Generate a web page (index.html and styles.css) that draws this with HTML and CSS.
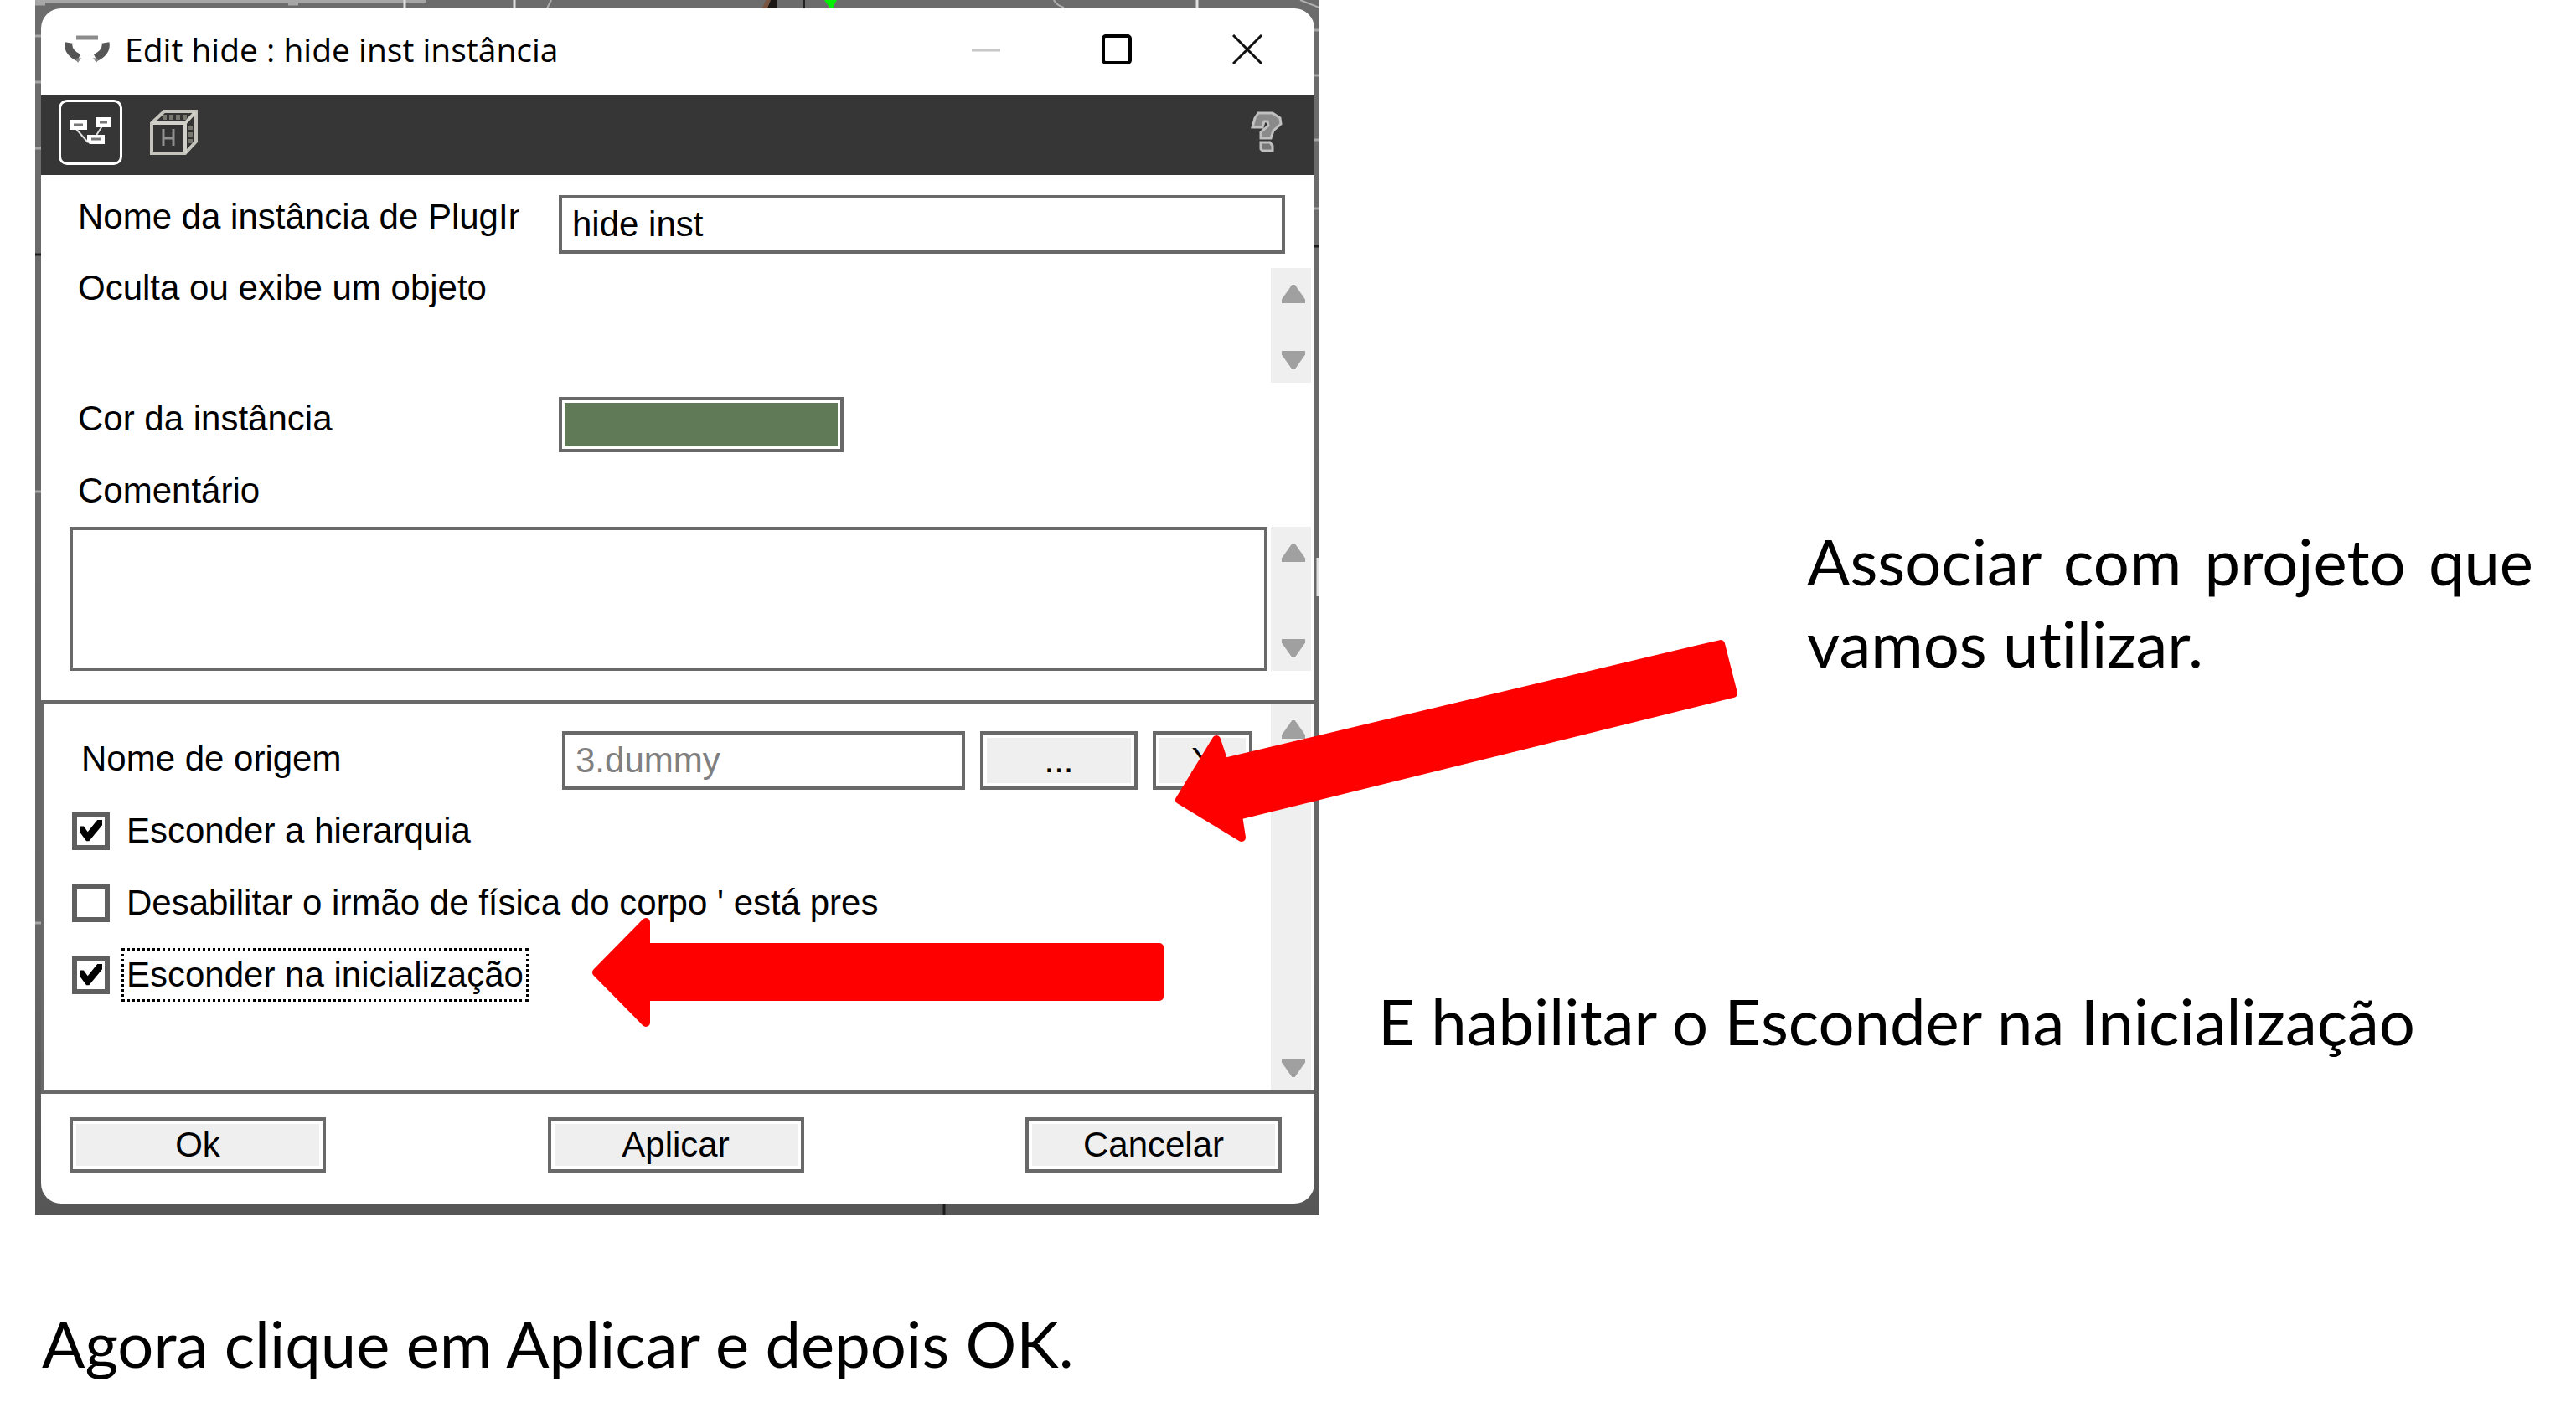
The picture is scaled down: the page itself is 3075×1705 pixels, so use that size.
FILE: index.html
```html
<!DOCTYPE html>
<html lang="pt-BR">
<head>
<meta charset="utf-8">
<title>Edit hide</title>
<link rel="stylesheet" href="styles.css">
</head>
<body>
<main class="slide">
  <section class="scene">
    <svg class="scene-lines" aria-hidden="true" width="100%" height="100%">
      <path d="M0 1h467" stroke="#a6a6a6" stroke-width="4"/>
      <path d="M0 5h12M302 5h12M0 43h7M0 98h7M0 177h7M0 587h7M0 1102h7M1527 36h6M1527 90h6M1527 167h6M1527 249h6" stroke="#a6a6a6" stroke-width="3"/>
      <path d="M441 0v10M572 0v10M1387 0v10" stroke="#e0e0e0" stroke-width="3"/>
      <path d="M616 0l-5 10M1216 0q3 6 12 9M1510 0l23 9" stroke="#b0b0b0" stroke-width="2" fill="none"/>
      <path d="M872 0h6l-4 10h-6z" fill="#7a5440"/>
      <path d="M878 0h8v10h-12z" fill="#1c1614"/>
      <path d="M918 0v10" stroke="#222" stroke-width="2"/>
      <path d="M942 0h15l-4 7v3h-6v-3z" fill="#00f000"/>
      <path d="M0 304h7M1527 294h6M1085 1436v15" stroke="#1c1c1c" stroke-width="3"/>
      <path d="M1531 666v46" stroke="#e0e0e0" stroke-width="3"/>
    </svg>
    <form class="window">
      <header class="titlebar">
        <svg class="app-icon" viewBox="0 0 54 34" aria-hidden="true">
          <path d="M14 3h26" stroke="#8c8c8c" stroke-width="5"/>
          <path d="M5 9q-2 11 12 18M49 9q2 11-12 18" fill="none" stroke="#555" stroke-width="9"/>
          <path d="M13 28l7-1-4 6zM41 28l-7-1 4 6z" fill="#888"/>
        </svg>
        <h1 class="title">Edit hide : hide inst instância</h1>
        <div class="controls">
          <button type="button" aria-label="Minimizar" disabled><svg viewBox="0 0 36 36"><path d="M1 19h34" stroke="#c8c8c8" stroke-width="3"/></svg></button>
          <button type="button" aria-label="Maximizar"><svg viewBox="0 0 36 36"><rect x="2" y="2" width="32" height="32" rx="3" fill="none" stroke="#000" stroke-width="4"/></svg></button>
          <button type="button" aria-label="Fechar"><svg viewBox="0 0 36 36"><path d="M1 1l34 34M35 1L1 35" stroke="#111" stroke-width="3"/></svg></button>
        </div>
      </header>
      <nav class="toolbar">
        <button type="button" class="tool tool-on" aria-label="Esquema">
          <svg viewBox="3 3 70 72"><path d="M20 34l15 17M53 30l-9 14" stroke="#ddd" stroke-width="2"/><path d="M13 24h21v12H13zM44 21h18v12H44zM34 42h21v11H37l-3-3z" fill="#fff"/><path d="M18 30h11M49 27h9M39 47h11" stroke="#777" stroke-width="3"/></svg>
        </button>
        <button type="button" class="tool" aria-label="Hierarquia">
          <svg viewBox="0 0 76 78"><path d="M11 28l15-14h38v36L51 64H11z" fill="#333" stroke="#c4c4bc" stroke-width="4"/><path d="M11 28h40v36M51 28l12-13" fill="none" stroke="#d0d0c8" stroke-width="4"/><path d="M24 21h30M57 31v24" stroke="#77776f" stroke-width="6" stroke-dasharray="5 3"/><path d="M25 35v20M37 35v20M25 46h12" stroke="#909090" stroke-width="3" fill="none"/></svg>
        </button>
        <button type="button" class="help" aria-label="Ajuda">
          <svg viewBox="0 0 40 50"><path d="M6 8L10 2h17l9 6 1 7-9 8-3 9H13v-7l9-8-1-5h-4l-2 7H3z" fill="#8a8a8a" stroke="#c0c0c0" stroke-width="3"/><path d="M13 37h11l3 4v6H15l-2-2z" fill="#777" stroke="#c0c0c0" stroke-width="3"/></svg>
        </button>
      </nav>
      <div class="general">
        <div class="row name-row">
          <label class="label" for="inst">Nome da instância de PlugIn</label>
          <input class="field" id="inst" type="text" value="hide inst">
        </div>
        <div class="about">
          <p>Oculta ou exibe um objeto</p>
          <div class="scroll"><i class="up"></i><i class="down"></i></div>
        </div>
        <div class="row color-row">
          <label class="label" for="cor">Cor da instância</label>
          <button type="button" class="swatch" id="cor"></button>
        </div>
        <label class="comment-label" for="com">Comentário</label>
        <div class="comment">
          <textarea class="field" id="com"></textarea>
          <div class="scroll"><i class="up"></i><i class="down"></i></div>
        </div>
      </div>
      <div class="panel">
        <div class="options">
          <div class="row source-row">
            <label class="label" for="src">Nome de origem</label>
            <input class="field muted" id="src" type="text" value="3.dummy" readonly>
            <button type="button" class="btn browse">...</button>
            <button type="button" class="btn clear">X</button>
          </div>
          <label class="check"><input type="checkbox" checked><span>Esconder a hierarquia</span></label>
          <label class="check"><input type="checkbox"><span>Desabilitar o irmão de física do corpo ' está pres</span></label>
          <label class="check"><input type="checkbox" checked><span class="focus">Esconder na inicialização</span></label>
        </div>
        <div class="scroll"><i class="up"></i><i class="down"></i></div>
      </div>
      <footer class="actions">
        <button type="button" class="btn">Ok</button>
        <button type="button" class="btn">Aplicar</button>
        <button type="button" class="btn">Cancelar</button>
      </footer>
    </form>
  </section>
  <aside class="notes">
    <p class="note-link">Associar com projeto que vamos utilizar.</p>
    <p class="note-hide">E habilitar o Esconder na Inicialização</p>
  </aside>
  <p class="closing">Agora clique em Aplicar e depois OK.</p>
  <svg class="arrow arrow-link" viewBox="0 0 676 248" aria-hidden="true"><path d="M6 194L50 122 59 149 652 8 667 67 76 213 80 239z"/></svg>
  <svg class="arrow arrow-hide" viewBox="0 0 684 132" aria-hidden="true"><path d="M6 66L65 6V36H678V95H65V126z"/></svg>
</main>
</body>
</html>
```
FILE: styles.css
```css
* { box-sizing: border-box; }
body { margin: 0; background: #fff; color: #000; }
p, h1 { margin: 0; font-weight: normal; }
button { padding: 0; border: 0; background: none; font: inherit; color: inherit; }
svg { display: block; }

.slide {
  position: relative;
  display: grid;
  grid-template-columns: minmax(0, 1533fr) minmax(0, 1500fr);
  padding-left: 42px;
  font: 76px/98px Lato, "Open Sans", sans-serif;
  font-variant-ligatures: none;
}

/* Modelling scene behind the dialog */
.scene {
  position: relative;
  padding: 10px 6px 14px 7px;
  background: linear-gradient(#6c6c6c, #666 80%, #565656);
  font: 42px/48px "Liberation Sans", Arial, sans-serif;
}
.scene-lines { position: absolute; inset: 0; }

.window {
  position: relative;
  overflow: hidden;
  border-radius: 24px;
  background: #fff;
}
.titlebar { display: flex; align-items: center; height: 104px; padding: 0 62px 6px 28px; }
.app-icon { width: 54px; height: 34px; }
.title { flex: 1; margin-left: 18px; font: 39px/52px "Open Sans", "Noto Sans", sans-serif; }
.controls { display: flex; gap: 120px; }
.controls svg { width: 36px; height: 36px; }

.toolbar { display: flex; align-items: center; gap: 24px; height: 95px; padding: 0 37px 8px 21px; background: #363636; }
.tool { width: 76px; height: 78px; }
.tool-on { border: 3px solid #fff; border-radius: 10px; }
.tool svg { width: 100%; height: 100%; }
.help { margin-left: auto; }
.help svg { width: 40px; height: 50px; }

.general { padding: 24px 4px 35px 34px; }
.row { display: flex; align-items: flex-start; }
.label { width: 526px; overflow: hidden; white-space: nowrap; }
.general .label, .about p, .comment-label { margin-left: 10px; }
.field {
  min-width: 0;
  height: 70px;
  padding: 0 12px;
  border: 4px solid #696969;
  border-radius: 0;
  outline: 0;
  background: #fff;
  font: inherit;
  color: #000;
}
.name-row { padding-right: 31px; }
.name-row .field { flex: 1; margin-left: 48px; }
.name-row .label, .color-row .label { padding-top: 2px; }
.about { display: flex; justify-content: space-between; height: 137px; margin-top: 17px; }
.color-row { margin-top: 17px; }
.swatch {
  width: 340px;
  height: 66px;
  margin-left: 48px;
  border: 4px solid #696969;
  background: #607a58;
  box-shadow: inset 0 0 0 3px #fff;
}
.comment-label { display: block; margin-top: 22px; }
.comment { display: flex; gap: 4px; height: 172px; margin-top: 19px; }
.comment .field { flex: 1; height: auto; resize: none; }

.scroll {
  display: flex;
  flex: none;
  flex-direction: column;
  justify-content: space-between;
  align-items: center;
  width: 48px;
  padding: 20px 0 16px 6px;
  background: #efefef;
}
.up, .down { width: 28px; height: 22px; background: #a0a0a0; }
.up { clip-path: polygon(44% 0, 56% 0, 100% 80%, 100% 100%, 0 100%, 0 80%); }
.down { clip-path: polygon(0 0, 100% 0, 100% 20%, 56% 100%, 44% 100%, 0 20%); }

.panel { display: flex; padding-right: 4px; border: 4px solid #696969; border-right: 0; }
.options { flex: 1; min-width: 0; padding: 33px 22px 106px 33px; }
.source-row .label { margin: 9px 48px 0 11px; }
.source-row .field { flex: 1; }
.muted { color: #808080; }
.btn { border: 4px solid #696969; background: #efefef; box-shadow: inset 0 0 0 4px #fff; }
.source-row .btn { height: 70px; margin-left: 18px; }
.browse { width: 188px; }
.clear { width: 119px; }
.check { display: flex; align-items: center; height: 64px; margin-top: 22px; white-space: nowrap; }
.check:nth-child(2) { margin-top: 17px; }
.check input {
  appearance: none;
  flex: none;
  width: 45px;
  height: 45px;
  margin: 0 14px 0 0;
  border: 6px solid #5f5f5f;
  background: #fff;
}
.check input:checked::before {
  content: "";
  display: block;
  width: 27px;
  height: 27px;
  margin: 3px;
  background: #000;
  clip-path: polygon(0 30%, 18% 30%, 36% 55%, 80% 0, 100% 0, 100% 25%, 42% 95%, 30% 95%, 0 55%);
}
.check span { padding: 6px 3px; border: 3px dotted transparent; line-height: 46px; }
.check .focus { border-color: #000; }

.actions { display: flex; justify-content: space-between; padding: 28px 39px 37px 34px; }
.actions .btn { width: 306px; height: 66px; line-height: 48px; }

.notes { padding: 621px 51px 0 70px; }
.note-link { margin-left: 512px; text-align: justify; }
.note-hide { margin-top: 353px; }
.closing { grid-column: 1 / -1; padding: 104px 0 50px 8px; }

/* Pointers laid over the dialog */
.arrow { position: absolute; overflow: visible; }
.arrow path { fill: red; stroke: red; stroke-width: 10px; stroke-linejoin: round; }
.arrow-link { left: 1402px; top: 761px; width: 676px; }
.arrow-hide { left: 706px; top: 1095px; width: 684px; }
```
